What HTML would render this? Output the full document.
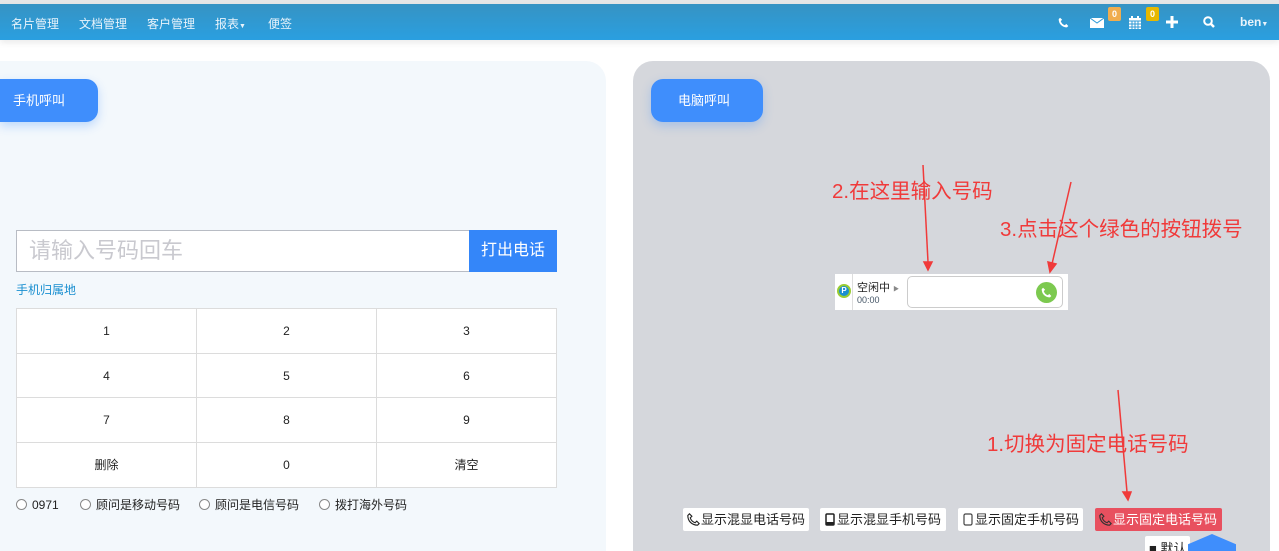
<!DOCTYPE html>
<html><head><meta charset="utf-8"><style>
*{margin:0;padding:0;box-sizing:border-box}
html,body{width:1279px;height:551px;overflow:hidden}
body{background:#fff;font-family:"Liberation Sans","Noto Sans CJK SC",sans-serif;position:relative}
.top{position:absolute;left:0;top:0;width:1279px;height:4px;background:#e6e6e6}
.nav{position:absolute;left:0;top:4px;width:1279px;height:36px;background:linear-gradient(#3693c3,#2a9fe0);box-shadow:0 3px 6px rgba(0,0,0,.08)}
.nav span{position:absolute;top:11px;font-size:12px;color:#e8f3fb}
.badge{position:absolute;top:3px;width:13px;height:14px;border-radius:2px;font-size:9px;color:#fff;text-align:center;line-height:14px;font-weight:bold}
.lp{position:absolute;left:-20px;top:61px;width:626px;height:490px;background:#f3f8fc;border-radius:20px 20px 0 0}
.rp{position:absolute;left:633px;top:61px;width:637px;height:490px;background:#d5d7dc;border-radius:20px 20px 0 0}
.tab{position:absolute;top:79px;height:43px;background:#3f8efc;color:#fff;font-size:13px;line-height:43px;border-radius:0 12px 12px 0;box-shadow:0 4px 10px rgba(63,142,252,.3)}
.inp{position:absolute;left:16px;top:230px;width:454px;height:42px;border:1px solid #b8bcc4;background:#fff;font-size:22px;color:#c9c9cf;padding-left:12px;line-height:40px}
.btn{position:absolute;left:469px;top:230px;width:88px;height:42px;background:#3486f9;color:#fff;font-size:16px;line-height:42px;text-align:center}
table{position:absolute;left:16px;top:308px;width:541px;border-collapse:collapse;background:#fff}
td{border:1px solid #dcdcdc;height:44.7px;text-align:center;font-size:12px;color:#222;width:33.3%}
.r{position:absolute;top:497px;font-size:12px;color:#222;line-height:16px}
.r i{display:inline-block;width:11px;height:11px;border:1px solid #888;border-radius:50%;vertical-align:-1px;margin-right:5px;background:#fff}
.ann{position:absolute;color:#f03a3a;font-size:20.5px}
.pb{position:absolute;top:508px;height:23px;background:#fff;border-radius:2px;font-size:13px;color:#222;line-height:23px;padding:0 4px;display:flex;align-items:center;gap:1px;overflow:hidden}
.pb svg{flex:none}
</style></head><body>
<div class="top"></div>
<div class="nav">
<span style="left:11px">名片管理</span><span style="left:79px">文档管理</span><span style="left:147px">客户管理</span><span style="left:215px">报表<small style="font-size:7px">▼</small></span><span style="left:268px">便签</span>
<svg style="position:absolute;left:1058px;top:13px" width="11" height="11" viewBox="0 0 16 16"><path d="M3 1l3 3-2 2c1 3 3 5 6 6l2-2 3 3-2 2C6 15 1 10 1 3z" fill="#fff"/></svg>
<svg style="position:absolute;left:1090px;top:14px" width="14" height="10" viewBox="0 0 14 10"><rect width="14" height="10" fill="#fff"/><path d="M0 0l7 5 7-5" stroke="#2f9ad6" fill="none"/></svg>
<div class="badge" style="left:1108px;background:#f0ad4e">0</div>
<svg style="position:absolute;left:1129px;top:12px" width="12" height="13" viewBox="0 0 12 13"><rect y="2" width="12" height="11" fill="#fff"/><path d="M0 5h12M3 5v8M6 5v8M9 5v8M0 8h12M0 11h12" stroke="#2f9ad6"/><rect x="2" width="2" height="3" fill="#fff"/><rect x="8" width="2" height="3" fill="#fff"/></svg>
<div class="badge" style="left:1146px;background:#e6b800">0</div>
<svg style="position:absolute;left:1166px;top:12px" width="12" height="12"><path d="M6 0v12M0 6h12" stroke="#fff" stroke-width="3"/></svg>
<svg style="position:absolute;left:1203px;top:12px" width="12" height="12"><circle cx="5" cy="5" r="3.8" stroke="#fff" stroke-width="2" fill="none"/><path d="M8 8l3 3" stroke="#fff" stroke-width="2.5"/></svg>
<span style="left:1240px;font-weight:bold">ben<small style="font-size:7px">▼</small></span>
</div>
<div class="lp"></div>
<div class="rp"></div>
<div class="tab" style="left:0;width:98px;padding-left:13px">手机呼叫</div>
<div class="tab" style="left:651px;width:112px;border-radius:12px;padding-left:27px">电脑呼叫</div>
<div class="inp">请输入号码回车</div><div class="btn">打出电话</div>
<div style="position:absolute;left:16px;top:281px;font-size:12px;color:#1a8fd0">手机归属地</div>
<table><tr><td>1</td><td>2</td><td>3</td></tr><tr><td>4</td><td>5</td><td>6</td></tr><tr><td>7</td><td>8</td><td>9</td></tr><tr><td>删除</td><td>0</td><td>清空</td></tr></table>
<div class="r" style="left:16px"><i></i>0971</div>
<div class="r" style="left:80px"><i></i>顾问是移动号码</div>
<div class="r" style="left:199px"><i></i>顾问是电信号码</div>
<div class="r" style="left:319px"><i></i>拨打海外号码</div>
<div class="ann" style="left:832px;top:174px">2.在这里输入号码</div>
<div class="ann" style="left:1000px;top:212px">3.点击这个绿色的按钮拨号</div>
<div class="ann" style="left:987px;top:427px">1.切换为固定电话号码</div>
<svg style="position:absolute;left:0;top:0" width="1279" height="551"><g stroke="#f03a3a" stroke-width="1.5" fill="#f03a3a">
<line x1="923" y1="165" x2="928" y2="262"/><polygon points="924,262 932,262 928,270"/>
<line x1="1071" y1="182" x2="1052" y2="264"/><polygon points="1048,262 1056,264 1050,272"/>
<line x1="1118" y1="390" x2="1127" y2="492"/><polygon points="1123,492 1131,492 1128,500"/></g></svg>
<div style="position:absolute;left:835px;top:274px;width:233px;height:36px;background:#fff"></div>
<div style="position:absolute;left:852px;top:274px;width:1px;height:36px;background:#ddd"></div>
<div style="position:absolute;left:837px;top:284px;width:14px;height:14px;border-radius:50%;border:2px solid #9c3;background:#1a8fd0;color:#fff;font-size:8px;text-align:center;line-height:10px;font-weight:bold">P</div>
<div style="position:absolute;left:857px;top:279px;font-size:11px;color:#222">空闲中 <span style="font-size:6px;color:#888">▶</span></div>
<div style="position:absolute;left:857px;top:295px;font-size:9px;color:#456">00:00</div>
<div style="position:absolute;left:907px;top:276px;width:156px;height:32px;border:1px solid #ccc;border-radius:5px;background:#fff"></div>
<div style="position:absolute;left:1036px;top:282px;width:21px;height:21px;border-radius:50%;background:#7cc94f"></div>
<svg style="position:absolute;left:1041px;top:287px" width="11" height="11" viewBox="0 0 16 16"><path d="M3 1l3 3-2 2c1 3 3 5 6 6l2-2 3 3-2 2C6 15 1 10 1 3z" fill="#fff"/></svg>
<div class="pb" style="left:683px;width:126px"><svg width="13" height="13" viewBox="0 0 16 16"><path d="M3 1l3 3-2 2c1 3 3 5 6 6l2-2 3 3-2 2C6 15 1 10 1 3z" fill="none" stroke="#222" stroke-width="1.4"/></svg>显示混显电话号码</div>
<div class="pb" style="left:820px;width:126px"><svg width="12" height="13"><rect x="2" y="1" width="8" height="11" rx="1" fill="none" stroke="#222" stroke-width="1.5"/><rect x="2" y="9" width="8" height="3" fill="#222"/></svg>显示混显手机号码</div>
<div class="pb" style="left:958px;width:125px"><svg width="12" height="13"><rect x="2" y="1" width="8" height="11" rx="1.5" fill="none" stroke="#444" stroke-width="1.2"/></svg>显示固定手机号码</div>
<div class="pb" style="left:1095px;width:127px;background:#e8505f;color:#fff"><svg width="13" height="13" viewBox="0 0 16 16"><path d="M3 1l3 3-2 2c1 3 3 5 6 6l2-2 3 3-2 2C6 15 1 10 1 3z" fill="none" stroke="#333" stroke-width="1.4"/></svg>显示固定电话号码</div>
<div class="pb" style="left:1145px;top:536px;height:15px;line-height:26px;align-items:flex-start;border-radius:2px 2px 0 0">■ 默认</div>
<div style="position:absolute;left:1188px;top:534px;width:48px;height:17px;background:#3f8efc;clip-path:polygon(50% 0,100% 60%,100% 100%,0 100%,0 60%)"></div>
</body></html>
